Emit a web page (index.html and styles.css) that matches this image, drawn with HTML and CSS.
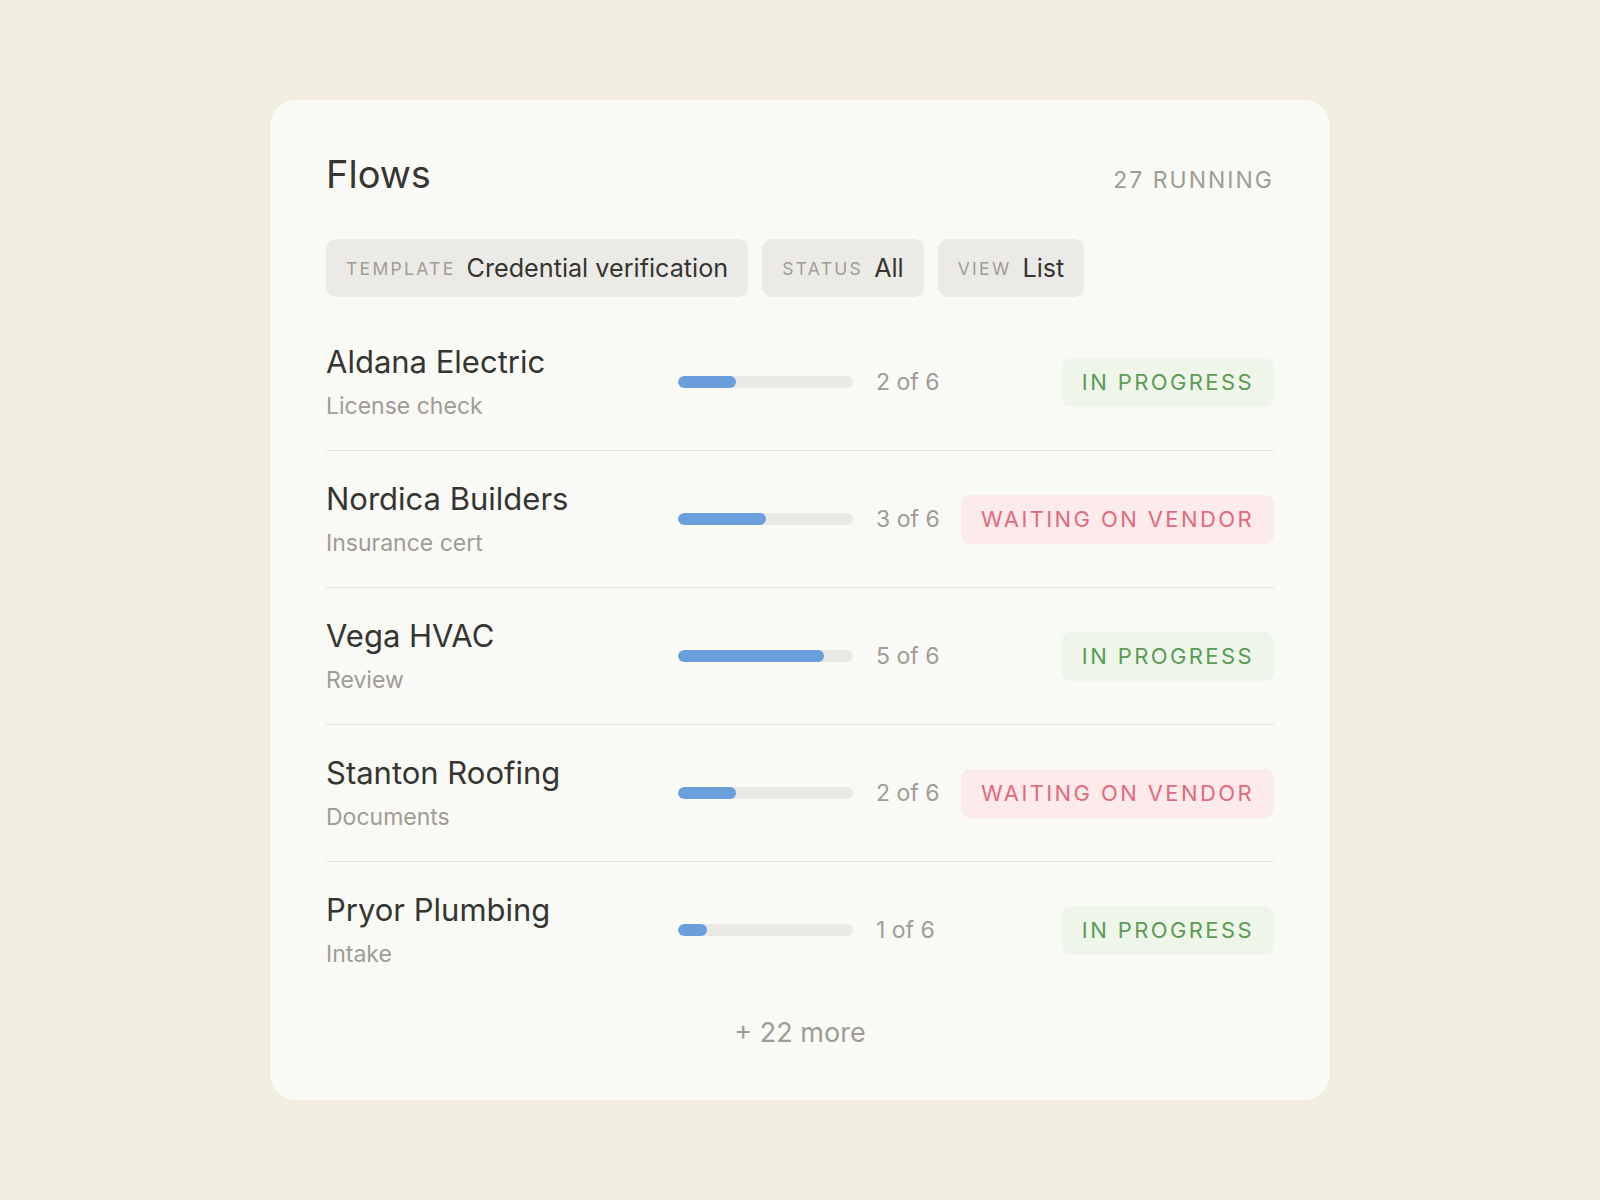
FILE: index.html
```html
<!DOCTYPE html>
<html lang="en">
<head>
    <meta charset="UTF-8">
    <meta name="viewport" content="width=device-width, initial-scale=1.0">
    <title>Flows</title>
    <link rel="stylesheet" href="styles.css">
</head>
<body>
    <div class="flows-card">
        <div class="flows-header">
            <h1 class="flows-title">Flows</h1>
            <span class="flows-count">27 running</span>
        </div>

        <div class="filters">
            <div class="chip"><span class="chip-label">Template</span><span class="chip-value">Credential verification</span></div>
            <div class="chip"><span class="chip-label">Status</span><span class="chip-value">All</span></div>
            <div class="chip"><span class="chip-label">View</span><span class="chip-value">List</span></div>
        </div>

        <ul class="flow-list">
            <li class="flow-row">
                <div class="flow-info">
                    <div class="flow-name">Aldana Electric</div>
                    <div class="flow-step">License check</div>
                </div>
                <div class="progress"><div class="progress-fill" style="width: 33.3%"></div></div>
                <div class="progress-text">2 of 6</div>
                <span class="badge badge-progress">In progress</span>
            </li>
            <li class="flow-row">
                <div class="flow-info">
                    <div class="flow-name">Nordica Builders</div>
                    <div class="flow-step">Insurance cert</div>
                </div>
                <div class="progress"><div class="progress-fill" style="width: 50%"></div></div>
                <div class="progress-text">3 of 6</div>
                <span class="badge badge-waiting">Waiting on vendor</span>
            </li>
            <li class="flow-row">
                <div class="flow-info">
                    <div class="flow-name">Vega HVAC</div>
                    <div class="flow-step">Review</div>
                </div>
                <div class="progress"><div class="progress-fill" style="width: 83.3%"></div></div>
                <div class="progress-text">5 of 6</div>
                <span class="badge badge-progress">In progress</span>
            </li>
            <li class="flow-row">
                <div class="flow-info">
                    <div class="flow-name">Stanton Roofing</div>
                    <div class="flow-step">Documents</div>
                </div>
                <div class="progress"><div class="progress-fill" style="width: 33.3%"></div></div>
                <div class="progress-text">2 of 6</div>
                <span class="badge badge-waiting">Waiting on vendor</span>
            </li>
            <li class="flow-row">
                <div class="flow-info">
                    <div class="flow-name">Pryor Plumbing</div>
                    <div class="flow-step">Intake</div>
                </div>
                <div class="progress"><div class="progress-fill" style="width: 16.7%"></div></div>
                <div class="progress-text">1 of 6</div>
                <span class="badge badge-progress">In progress</span>
            </li>
        </ul>

        <div class="flows-more">+ 22 more</div>
    </div>
</body>
</html>
```

FILE: styles.css
```css
:root {
    --bg: #f1ede1;
    --card: #f9f9f5;
    --chip: #ebeae6;
    --text: #353531;
    --muted: #a09c95;
    --line: #e5e3de;
    --track: #ebe9e5;
    --blue: #6a9fdc;
    --green: #5c9a56;
    --green-bg: #edf6e9;
    --red: #e06c7e;
    --red-bg: #fdeaea;
}

* {
    margin: 0;
    padding: 0;
    box-sizing: border-box;
}

body {
    font-family: 'Inter', 'Liberation Sans', sans-serif;
    background: var(--bg);
    min-height: 100vh;
    display: flex;
    align-items: center;
    justify-content: center;
    color: var(--text);
}

.flows-card {
    background: var(--card);
    border-radius: 26px;
    width: 1060px;
    height: 1000px;
    padding: 51px 56px 50px;
}

.flows-header {
    display: flex;
    justify-content: space-between;
    align-items: baseline;
    margin-bottom: 42px;
}

.flows-title {
    font-size: 38px;
    line-height: 46px;
    font-weight: 400;
}

.flows-count {
    font-size: 23px;
    color: var(--muted);
    text-transform: uppercase;
    letter-spacing: 2px;
}

.filters {
    display: flex;
    gap: 14px;
    margin-bottom: 17px;
}

.chip {
    background: var(--chip);
    border-radius: 10px;
    height: 58px;
    padding: 0 20px;
    display: flex;
    align-items: center;
    gap: 11px;
}

.chip-label {
    font-size: 17.5px;
    color: var(--muted);
    text-transform: uppercase;
    letter-spacing: 2.3px;
}

.chip-value {
    font-size: 25.2px;
}

.flow-list {
    list-style: none;
}

.flow-row {
    display: grid;
    grid-template-columns: 352px 175px 1fr auto;
    align-items: center;
    padding: 30px 0;
    border-bottom: 1px solid var(--line);
}

.flow-row:last-child {
    border-bottom: none;
}

.flow-name {
    font-size: 31px;
    line-height: 36px;
}

.flow-step {
    font-size: 23px;
    line-height: 28px;
    margin-top: 12px;
    color: var(--muted);
}

.progress {
    height: 12px;
    border-radius: 6px;
    background: var(--track);
    overflow: hidden;
}

.progress-fill {
    height: 100%;
    border-radius: 6px;
    background: var(--blue);
}

.progress-text {
    padding-left: 23px;
    font-size: 23px;
    color: var(--muted);
}

.badge {
    font-size: 22px;
    line-height: 23px;
    padding: 13px 20px;
    border-radius: 9px;
    text-transform: uppercase;
    letter-spacing: 2.4px;
}

.badge-progress {
    background: var(--green-bg);
    color: var(--green);
}

.badge-waiting {
    background: var(--red-bg);
    color: var(--red);
}

.flows-more {
    margin-top: 18px;
    text-align: center;
    font-size: 27px;
    line-height: 34px;
    color: var(--muted);
}
```
